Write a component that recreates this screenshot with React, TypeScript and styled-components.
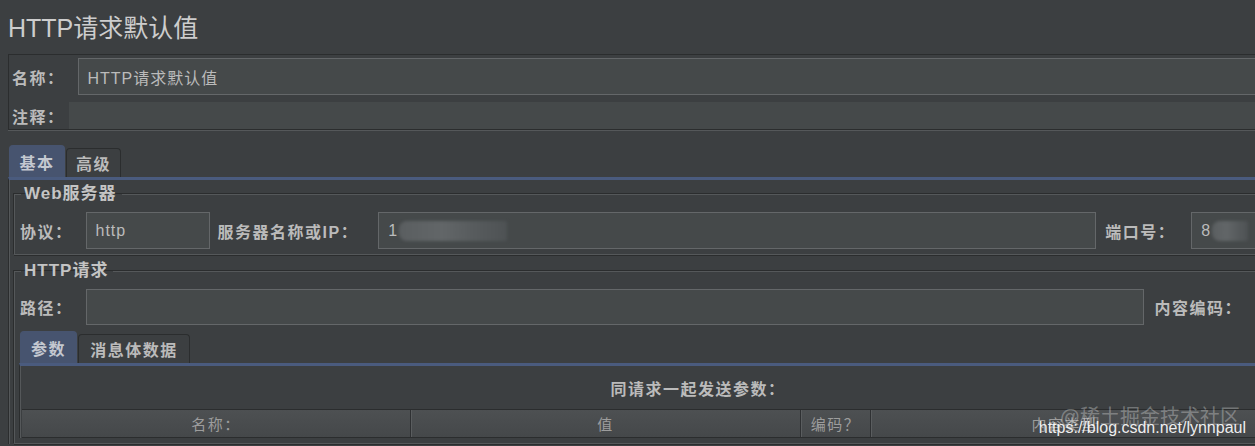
import styled, { createGlobalStyle } from 'styled-components';

// Darcula-ish palette taken from the screenshot
const BG = '#3c3f41';
const FIELD_BG = '#45494a';
const FIELD_BORDER = '#646769';
const DARK_LINE = '#2b2d2e';
const ETCH_LINE = '#55585a';
const TAB_ACTIVE = '#47546f';
const TAB_LINE = '#4a5b7e';
const TEXT = '#bbbbbb';

const CJK = `"Liberation Sans", "Noto Sans CJK SC", sans-serif`;

const GlobalStyle = createGlobalStyle`
  html, body {
    margin: 0;
    padding: 0;
    background: ${BG};
    overflow: hidden;
  }
  body {
    font-family: ${CJK};
    color: ${TEXT};
  }
`;

const Page = styled.div`
  position: relative;
  width: 1376px;
  height: 446px;
  overflow: hidden;
`;

const Title = styled.h1`
  margin: 0;
  padding: 16px 0 14px 8px;
  font-size: 25px;
  line-height: 24px;
  font-weight: 400;
  color: #cdcdcd;
`;

const NamePanel = styled.div`
  margin-left: 8px;
  border: 1px solid ${DARK_LINE};
  box-shadow: 0 1px 0 ${ETCH_LINE};
  padding: 3px 0 0 3px;
  display: flex;
  flex-direction: column;
  gap: 7px;
`;

const Spacer = styled.div<{ $h: number }>`
  height: ${p => p.$h}px;
`;

const Row = styled.div`
  display: flex;
  align-items: center;
`;

const Label = styled.span<{ $gap?: number; $lead?: number }>`
  flex: none;
  font-size: 16px;
  font-weight: 700;
  letter-spacing: 1.5px;
  margin-left: ${p => p.$lead ?? 0}px;
  margin-right: ${p => p.$gap ?? 13}px;
  color: ${TEXT};
  white-space: nowrap;
`;

const Field = styled.div<{ $w?: number; $h?: number; $flat?: boolean }>`
  box-sizing: border-box;
  flex: ${p => (p.$w ? 'none' : '1')};
  width: ${p => (p.$w ? `${p.$w}px` : 'auto')};
  height: ${p => p.$h ?? 37}px;
  background: ${FIELD_BG};
  border: 1px solid ${p => (p.$flat ? FIELD_BG : FIELD_BORDER)};
  display: flex;
  align-items: center;
  padding-left: 9px;
  font-size: 16px;
  color: ${TEXT};
  letter-spacing: 1px;
  white-space: nowrap;
  overflow: hidden;
`;

// mosaic that hides the host / port in the screenshot
const Blur = styled.span<{ $w: number }>`
  display: inline-block;
  width: ${p => p.$w}px;
  height: 20px;
  margin-left: 1px;
  border-radius: 8px 2px 2px 8px;
  background: linear-gradient(90deg, #5a5e60 0%, #626668 40%, #575b5d 70%, #4e5254 100%);
  filter: blur(1.5px);
`;

const TabStrip = styled.div<{ $inset: number }>`
  display: flex;
  align-items: flex-end;
  margin-left: ${p => p.$inset}px;
  height: 32px;
`;

const Tab = styled.div<{ $active?: boolean; $w: number }>`
  box-sizing: border-box;
  width: ${p => p.$w}px;
  height: ${p => (p.$active ? 32 : 29)}px;
  margin-right: ${p => (p.$active ? 1 : 0)}px;
  background: ${p => (p.$active ? TAB_ACTIVE : BG)};
  border: 1px solid ${p => (p.$active ? TAB_ACTIVE : DARK_LINE)};
  border-bottom: none;
  border-radius: 4px 4px 0 0;
  display: flex;
  align-items: center;
  justify-content: center;
  font-size: 16px;
  font-weight: 700;
  letter-spacing: 1.5px;
  color: ${p => (p.$active ? '#c4c8d0' : TEXT)};
`;

const TabBody = styled.div<{ $inset: number; $pad: number }>`
  margin-left: ${p => p.$inset}px;
  border-top: 3px solid ${TAB_LINE};
  border-left: 1px solid ${DARK_LINE};
  box-shadow: inset 1px 0 0 ${ETCH_LINE};
  padding-left: ${p => p.$pad}px;
`;

const Group = styled.fieldset<{ $top: number }>`
  margin: ${p => p.$top}px 0 0 0;
  padding: 8px 0 5px 5px;
  border: none;
  border-top: 1px solid ${ETCH_LINE};
  border-left: 1px solid ${ETCH_LINE};
  border-bottom: 1px solid ${ETCH_LINE};
  box-shadow: 0 1px 0 ${DARK_LINE}, -1px -1px 0 ${DARK_LINE};
  min-width: 0;
`;

const Legend = styled.legend`
  margin-left: 1px;
  padding: 0 5px 0 3px;
  font-size: 17px;
  line-height: 20px;
  font-weight: 700;
  letter-spacing: 1px;
  color: #c4c4c4;
`;

const Caption = styled.div`
  height: 43px;
  display: flex;
  align-items: center;
  justify-content: center;
  font-size: 16px;
  font-weight: 700;
  letter-spacing: 1.5px;
  color: ${TEXT};
`;

const Table = styled.div`
  margin-left: 2px;
  display: flex;
  height: 27px;
  border-top: 1px solid ${DARK_LINE};
  border-bottom: 1px solid ${DARK_LINE};
  background: linear-gradient(#4d5052, #45484a);
`;

const HeadCell = styled.div<{ $w: number }>`
  box-sizing: border-box;
  flex: none;
  width: ${p => p.$w}px;
  display: flex;
  align-items: center;
  justify-content: center;
  border-right: 1px solid #2f3133;
  box-shadow: 1px 0 0 #5a5d5f;
  font-size: 15px;
  letter-spacing: 1.5px;
  color: #9d9d9d;
`;

const Watermark = styled.div`
  position: absolute;
  left: 1030px;
  top: 406px;
  width: 216px;
  text-align: right;
  pointer-events: none;
`;

const MarkCn = styled.div`
  padding-right: 6px;
  font-size: 20px;
  line-height: 22px;
  color: rgba(255, 255, 255, 0.3);
`;

const MarkUrl = styled.div`
  margin-top: -9px;
  font-size: 16px;
  line-height: 18px;
  color: rgba(255, 255, 255, 0.92);
  font-family: "Liberation Sans", Arial, sans-serif;
`;

const columns = [
  { title: '名称：', w: 389 },
  { title: '值', w: 390 },
  { title: '编码？', w: 70 },
  { title: '内容类型', w: 388 },
  { title: '包含等于？', w: 102 },
];

export default function App() {
  return (
    <>
      <GlobalStyle />
      <Page>
        <Title>HTTP请求默认值</Title>

        <NamePanel>
          <Row>
            <Label>名称：</Label>
            <Field>HTTP请求默认值</Field>
          </Row>
          <Row>
            <Label $gap={4}>注释：</Label>
            <Field $h={27} $flat />
          </Row>
        </NamePanel>

        <Spacer $h={15} />
        <TabStrip $inset={9}>
          <Tab $active $w={56}>基本</Tab>
          <Tab $w={55}>高级</Tab>
        </TabStrip>

        <TabBody $inset={8} $pad={5}>
          <Group $top={4}>
            <Legend>Web服务器</Legend>
            <Row>
              <Label>协议：</Label>
              <Field $w={124}>http</Field>
              <Label $lead={8} $gap={20}>服务器名称或IP：</Label>
              <Field $w={718}>
                1<Blur $w={108} />
              </Field>
              <Label $lead={9} $gap={16}>端口号：</Label>
              <Field $w={110}>
                8<Blur $w={36} />
              </Field>
            </Row>
          </Group>

          <Group $top={6}>
            <Legend>HTTP请求</Legend>
            <Row>
              <Label>路径：</Label>
              <Field $w={1058} $h={36} />
              <Label $lead={11} $gap={16}>内容编码：</Label>
              <Field $w={120} $h={36} />
            </Row>

            <Spacer $h={6} />
            <TabStrip $inset={0}>
              <Tab $active $w={57}>参数</Tab>
              <Tab $w={112}>消息体数据</Tab>
            </TabStrip>
            <TabBody $inset={-1} $pad={0}>
              <Caption>同请求一起发送参数：</Caption>
              <Table>
                {columns.map(c => (
                  <HeadCell key={c.title} $w={c.w}>{c.title}</HeadCell>
                ))}
              </Table>
            </TabBody>
          </Group>
        </TabBody>

        <Watermark>
          <MarkCn>@稀土掘金技术社区</MarkCn>
          <MarkUrl>https://blog.csdn.net/lynnpaul</MarkUrl>
        </Watermark>
      </Page>
    </>
  );
}
